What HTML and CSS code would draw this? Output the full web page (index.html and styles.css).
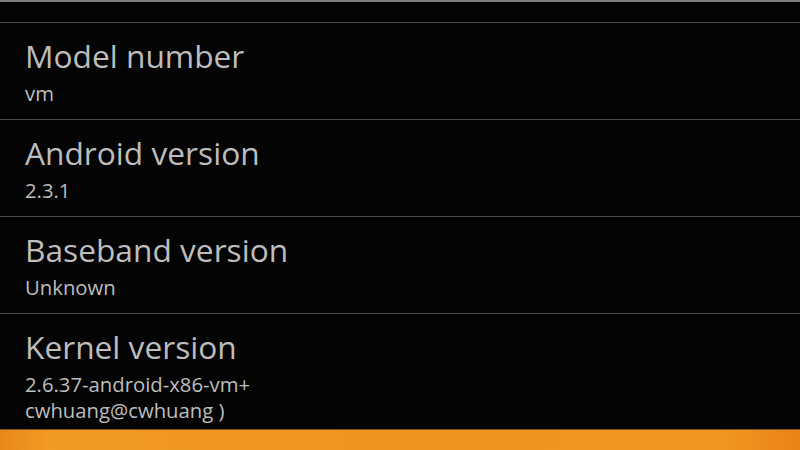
FILE: index.html
```html
<!DOCTYPE html>
<html>
<head>
<meta charset="utf-8">
<link rel="stylesheet" href="styles.css">
</head>
<body>
<div class="screen">
  <div class="topline"></div>
  <div class="list">
    <div class="item">
      <div class="title">Model number</div>
      <div class="summary">vm</div>
    </div>
    <div class="item">
      <div class="title">Android version</div>
      <div class="summary">2.3.1</div>
    </div>
    <div class="item">
      <div class="title">Baseband version</div>
      <div class="summary">Unknown</div>
    </div>
    <div class="item item-last">
      <div class="title">Kernel version</div>
      <div class="summary">2.6.37-android-x86-vm+<br>cwhuang@cwhuang )</div>
    </div>
  </div>
  <div class="bottombar"></div>
</div>
</body>
</html>
```
FILE: styles.css
```css
html, body {
  margin: 0;
  padding: 0;
  background: #040404;
}
.screen {
  width: 800px;
  height: 450px;
  display: flex;
  flex-direction: column;
  overflow: hidden;
  font-family: "Open Sans", "Noto Sans", "DejaVu Sans", sans-serif;
  color: #bdbdbd;
}
.topline {
  height: 2px;
  background: #7f7f7f;
  flex: none;
}
.list {
  flex: 1;
  padding-top: 20px;
  overflow: hidden;
}
.item {
  border-top: 1px solid #4c4c4c;
  height: 81px;
  padding: 15px 0 0 25px;
}
.item-last {
  height: auto;
}
.title {
  font-size: 31.7px;
  line-height: 36px;
}
.summary {
  font-size: 20.3px;
  line-height: 26px;
  margin-top: 6px;
}
.bottombar {
  flex: none;
  height: 20px;
  border-top: 1px solid #7a5420;
  background: linear-gradient(to right, #e8881a 0%, #f29a22 6%, #f0941e 50%, #f2961f 90%, #ea8317 100%);
}
```
